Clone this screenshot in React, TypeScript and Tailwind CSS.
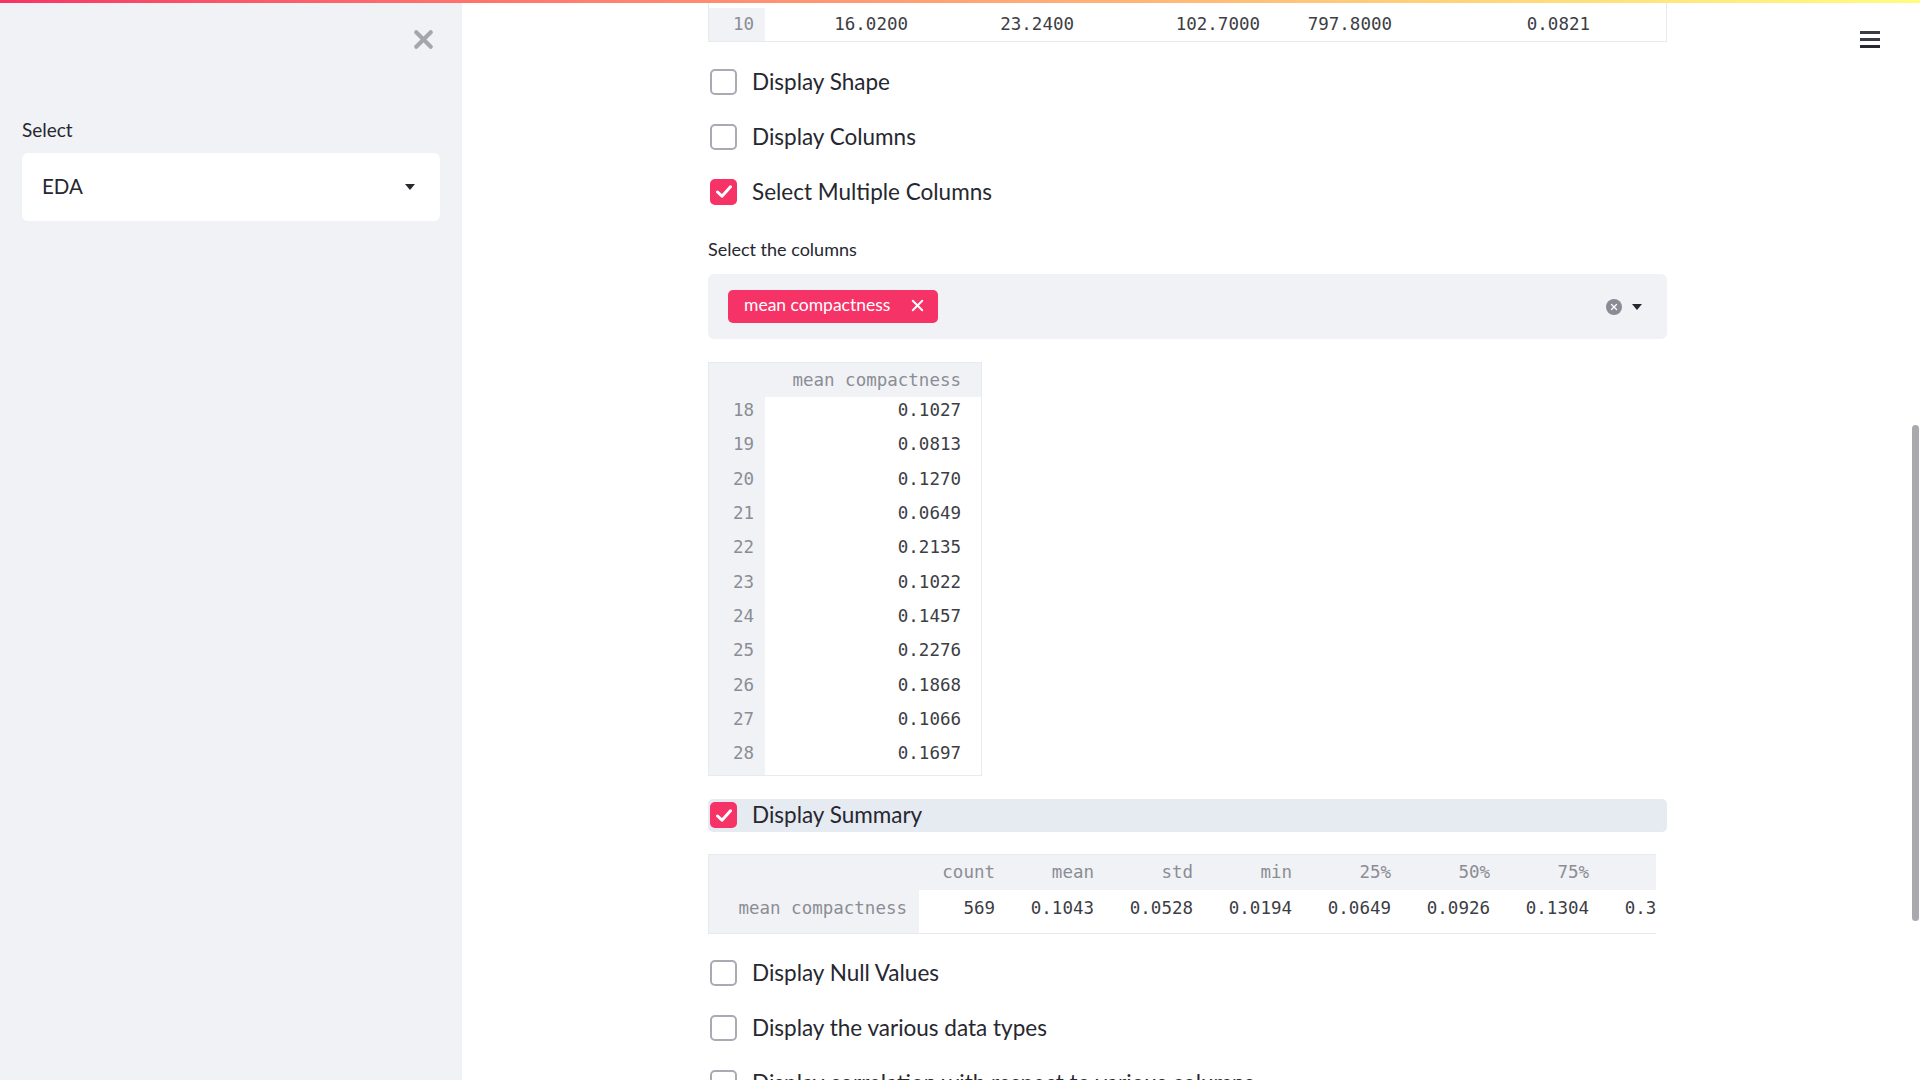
import { X } from "lucide-react";

const sans = "font-['Lato','Noto_Sans',sans-serif]";
const mono = "font-['DejaVu_Sans_Mono','Liberation_Mono',monospace]";

const compactness = [
  ["18", "0.1027"],
  ["19", "0.0813"],
  ["20", "0.1270"],
  ["21", "0.0649"],
  ["22", "0.2135"],
  ["23", "0.1022"],
  ["24", "0.1457"],
  ["25", "0.2276"],
  ["26", "0.1868"],
  ["27", "0.1066"],
  ["28", "0.1697"],
];

const summaryCols = [
  { h: "count", v: "569", w: "w-[96px]" },
  { h: "mean", v: "0.1043", w: "w-[99px]" },
  { h: "std", v: "0.0528", w: "w-[99px]" },
  { h: "min", v: "0.0194", w: "w-[99px]" },
  { h: "25%", v: "0.0649", w: "w-[99px]" },
  { h: "50%", v: "0.0926", w: "w-[99px]" },
  { h: "75%", v: "0.1304", w: "w-[99px]" },
  { h: "max", v: "0.3454", w: "w-[99px]" },
];

const Caret = () => (
  <svg width="10" height="6" viewBox="0 0 10 6" className="shrink-0">
    <path d="M0 0h10L5 6z" fill="#262730" />
  </svg>
);

const Checkbox = ({ label, checked = false, highlight = false }: { label: string; checked?: boolean; highlight?: boolean }) => (
  <div className={`flex h-[33px] items-center gap-[15px] rounded-[5px] pl-[2px] ${highlight ? "bg-[#e6eaf1]" : ""}`}>
    {checked ? (
      <div className="flex h-[26px] w-[27px] shrink-0 items-center justify-center rounded-[5px] bg-[#f63366]">
        <svg width="16" height="13" viewBox="0 0 16 13">
          <path d="M1.5 7l4.5 4.2L14.5 1.8" fill="none" stroke="white" strokeWidth="3" strokeLinecap="round" strokeLinejoin="round" />
        </svg>
      </div>
    ) : (
      <div className="h-[26px] w-[27px] shrink-0 rounded-[5px] border-2 border-[#a8abb3] bg-white" />
    )}
    <span className="whitespace-nowrap text-[22.5px] text-[#262730]">{label}</span>
  </div>
);

export default function App() {
  return (
    <div className={`relative flex h-[1080px] w-[1920px] overflow-hidden bg-white ${sans}`}>
      <div className="absolute left-0 right-0 top-0 z-10 h-[3px] bg-gradient-to-r from-[#f63366] to-[#fffd80]" />

      {/* sidebar */}
      <aside className="w-[462px] shrink-0 bg-[#f0f2f6] px-[22px]">
        <div className="flex justify-end pr-[2px] pt-[25px]">
          <X className="h-[29px] w-[29px] text-[#a3a6ad]" strokeWidth={3.5} />
        </div>
        <div className="mt-[62px] text-[19px] text-[#262730]">Select</div>
        <div className="mt-[8px] flex h-[68px] items-center justify-between rounded-[6px] bg-white pl-[20px] pr-[25px]">
          <span className="text-[20.5px] text-[#262730]">EDA</span>
          <Caret />
        </div>
      </aside>

      {/* main */}
      <main className="relative flex-1">
        <div className="absolute right-[40px] top-[31px] flex w-[20px] flex-col gap-[4px]">
          <div className="h-[3px] bg-[#3a3b45]" />
          <div className="h-[3px] bg-[#3a3b45]" />
          <div className="h-[3px] bg-[#262730]" />
        </div>
        <div className="absolute right-[1px] top-[425px] h-[496px] w-[7px] rounded-full bg-[#a9a9ae]" />

        <div className="ml-[246px] flex w-[959px] flex-col">
          {/* tail of the first table */}
          <div className={`flex h-[42px] border-x border-b border-[#e6eaf1] pt-[8px] text-[17.5px] ${mono}`}>
            <div className="flex w-[56px] items-center justify-end bg-[#f0f2f6] pr-[11px] text-[#8b8d94]">10</div>
            <div className="flex w-[163px] items-center justify-end pr-[20px] text-[#3c3d45]">16.0200</div>
            <div className="flex w-[166px] items-center justify-end pr-[20px] text-[#3c3d45]">23.2400</div>
            <div className="flex w-[186px] items-center justify-end pr-[20px] text-[#3c3d45]">102.7000</div>
            <div className="flex w-[132px] items-center justify-end pr-[20px] text-[#3c3d45]">797.8000</div>
            <div className="flex w-[198px] items-center justify-end pr-[20px] text-[#3c3d45]">0.0821</div>
          </div>

          <div className="mt-[23px] flex flex-col gap-[22px]">
            <Checkbox label="Display Shape" />
            <Checkbox label="Display Columns" />
            <Checkbox label="Select Multiple Columns" checked />
          </div>

          <div className="mt-[28px] text-[18px] text-[#262730]">Select the columns</div>
          <div className="mt-[11px] flex h-[65px] items-center justify-between rounded-[6px] bg-[#f0f2f6] pl-[20px] pr-[25px]">
            <div className="flex h-[33px] w-[210px] items-center justify-between rounded-[5px] bg-[#f63366] pb-[2px] pl-[16px] pr-[11px]">
              <span className="text-[17.5px] text-white">mean compactness</span>
              <X className="h-[19px] w-[19px] text-white" strokeWidth={2.5} />
            </div>
            <div className="flex items-center gap-[10px]">
              <div className="flex h-[16px] w-[16px] items-center justify-center rounded-full bg-[#8a8c95]">
                <X className="h-[10px] w-[10px] text-white" strokeWidth={3} />
              </div>
              <Caret />
            </div>
          </div>

          {/* selected column table */}
          <div className={`mt-[23px] w-[274px] border border-[#e6eaf1] text-[17.5px] ${mono}`}>
            <div className="flex h-[34px] items-center justify-end bg-[#f0f2f6] pr-[20px] text-[#8b8d94]">mean compactness</div>
            {compactness.map(([i, v]) => (
              <div key={i} className="flex h-[34.35px]">
                <div className="flex w-[56px] items-center justify-end bg-[#f0f2f6] pb-[8px] pr-[11px] text-[#8b8d94]">{i}</div>
                <div className="flex flex-1 items-center justify-end pb-[8px] pr-[20px] text-[#3c3d45]">{v}</div>
              </div>
            ))}
          </div>

          <div className="mt-[23px]">
            <Checkbox label="Display Summary" checked highlight />
          </div>

          {/* summary table */}
          <div className={`mt-[22px] w-[948px] overflow-hidden border-y border-l border-[#e6eaf1] text-[17.5px] ${mono}`}>
            <div className="flex h-[35px] bg-[#f0f2f6]">
              <div className="w-[210px] shrink-0" />
              {summaryCols.map((c) => (
                <div key={c.h} className={`flex shrink-0 items-center justify-end pr-[20px] text-[#8b8d94] ${c.w}`}>{c.h}</div>
              ))}
            </div>
            <div className="flex h-[43px]">
              <div className="flex w-[210px] shrink-0 items-center justify-end bg-[#f0f2f6] pb-[6px] pr-[12px] text-[#8b8d94]">mean compactness</div>
              {summaryCols.map((c) => (
                <div key={c.h} className={`flex shrink-0 items-center justify-end pb-[6px] pr-[20px] text-[#3c3d45] ${c.w}`}>{c.v}</div>
              ))}
            </div>
          </div>

          <div className="mt-[23px] flex flex-col gap-[22px]">
            <Checkbox label="Display Null Values" />
            <Checkbox label="Display the various data types" />
            <Checkbox label="Display correlation with respect to various columns" />
          </div>
        </div>
      </main>
    </div>
  );
}
